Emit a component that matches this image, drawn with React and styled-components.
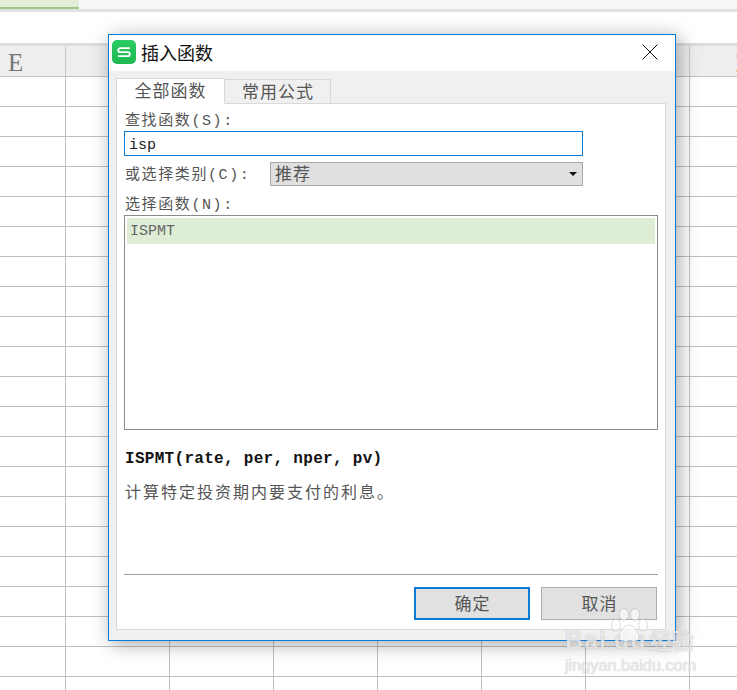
import React from 'react';
import styled, { createGlobalStyle } from 'styled-components';

const SERIF = `"Liberation Mono", "Noto Sans CJK SC", monospace`;
const CJK = `"Noto Sans CJK SC", "Liberation Sans", sans-serif`;

const ROW_COUNT = 21;
const COLUMNS = ['E', '', '', '', '', '', '', ''];

export default function App() {
  return (
    <Page>
      <GlobalStyle />
      <TopStrip>
        <ActiveSheet />
      </TopStrip>
      <FormulaBar />
      <Sheet>
        {COLUMNS.map((name, i) => (
          <ColumnHead key={i}>{name}</ColumnHead>
        ))}
        {Array.from({ length: ROW_COUNT * COLUMNS.length }).map((_, i) => (
          <Cell key={i} />
        ))}
      </Sheet>
      <OrangeMark />

      <Dialog>
        <TitleBar>
          <TitleLeft>
            <AppIcon />
            <Title>插入函数</Title>
          </TitleLeft>
          <CloseIcon />
        </TitleBar>

        <Body>
          <Tabs>
            <Tab $active>全部函数</Tab>
            <Tab>常用公式</Tab>
          </Tabs>
          <Pane>
            <Label>查找函数(S):</Label>
            <SearchBox>isp</SearchBox>
            <CategoryRow>
              <CategoryLabel>或选择类别(C):</CategoryLabel>
              <Select>
                <span>推荐</span>
                <Arrow />
              </Select>
            </CategoryRow>
            <ListLabel>选择函数(N):</ListLabel>
            <FunctionList>
              <FunctionItem>ISPMT</FunctionItem>
            </FunctionList>
            <Signature>ISPMT(rate, per, nper, pv)</Signature>
            <Description>计算特定投资期内要支付的利息。</Description>
            <Footer>
              <Button $primary>确定</Button>
              <Button>取消</Button>
            </Footer>
          </Pane>
        </Body>
      </Dialog>

      <Watermark>
        <WatermarkLogo>
          Bai
          <PawGap />
          du
          <WatermarkCn>经验</WatermarkCn>
          <PawIcon />
        </WatermarkLogo>
        <WatermarkUrl>jingyan.baidu.com</WatermarkUrl>
      </Watermark>
    </Page>
  );
}

function AppIcon() {
  return (
    <svg width="24" height="24" viewBox="0 0 24 24">
      <defs>
        <linearGradient id="wpsGreen" x1="0" y1="0" x2="0" y2="1">
          <stop offset="0" stopColor="#2bcb63" />
          <stop offset="1" stopColor="#1fb84f" />
        </linearGradient>
      </defs>
      <rect width="24" height="24" rx="5" fill="url(#wpsGreen)" />
      <path
        d="M18 8.2H8.2a2 2 0 0 0 0 4h7.6a2 2 0 0 1 0 4H6"
        fill="none"
        stroke="#fff"
        strokeWidth="1.8"
      />
    </svg>
  );
}

function CloseIcon() {
  return (
    <CloseSvg width="16" height="16" viewBox="0 0 16 16">
      <path d="M.5.5l15 15M15.5.5l-15 15" stroke="#111" strokeWidth="1" fill="none" />
    </CloseSvg>
  );
}

function PawIcon() {
  return (
    <PawSvg width="40" height="38" viewBox="0 0 40 38">
      <ellipse cx="7" cy="17" rx="4.5" ry="6" />
      <ellipse cx="15" cy="6.5" rx="4.5" ry="6" />
      <ellipse cx="26" cy="6.5" rx="4.5" ry="6" />
      <ellipse cx="34" cy="17" rx="4.5" ry="6" />
      <path d="M20 17c5 0 10 7 10 12 0 5-5 5-10 4-5 1-10 1-10-4 0-5 5-12 10-12z" />
    </PawSvg>
  );
}

// styled components:

const GlobalStyle = createGlobalStyle`
  html, body {
    margin: 0;
    padding: 0;
    background: #fff;
  }
`;

const Page = styled.div`
  position: relative;
  width: 737px;
  height: 690px;
  overflow: hidden;
  background: #fff;
`;

const TopStrip = styled.div`
  height: 9px;
  background: #f8f8f8;
  border-bottom: 3px solid #e2e2e4;
`;

const ActiveSheet = styled.div`
  width: 79px;
  height: 7px;
  background: #e3eed8;
  border-bottom: 2px solid #a3c585;
`;

const FormulaBar = styled.div`
  height: 31px;
  background: #fff;
`;

const Sheet = styled.div`
  display: grid;
  grid-template-columns: 66px repeat(7, 104px);
  grid-template-rows: 31px;
  grid-auto-rows: 30px;
  border-top: 3px solid #dcdcdc;
`;

const ColumnHead = styled.div`
  box-sizing: border-box;
  background: #eeeeee;
  border-right: 1px solid #c6c6c6;
  border-bottom: 1px solid #c0c0c0;
  padding: 2px 0 0 8px;
  font-family: "Liberation Serif", serif;
  font-size: 25px;
  line-height: 30px;
  color: #777;
`;

const Cell = styled.div`
  box-sizing: border-box;
  border-right: 1px solid #bfbfbf;
  border-bottom: 1px solid #bfbfbf;
`;

const OrangeMark = styled.div`
  position: absolute;
  right: 0;
  top: 55px;
  box-sizing: border-box;
  width: 1px;
  height: 17px;
  border-top: 2px solid #f3c27e;
  border-bottom: 2px solid #f3c27e;
`;

const Dialog = styled.div`
  position: absolute;
  left: 108px;
  top: 34px;
  box-sizing: border-box;
  width: 568px;
  height: 607px;
  display: flex;
  flex-direction: column;
  background: #f0f0f0;
  border: 1px solid #0a7bd8;
  box-shadow: 3px 3px 18px rgba(0, 0, 0, 0.35);
`;

const TitleBar = styled.div`
  height: 36px;
  box-sizing: border-box;
  flex: none;
  display: flex;
  align-items: center;
  justify-content: space-between;
  padding: 0 17px 2px 3px;
  background: #fff;
`;

const TitleLeft = styled.div`
  display: flex;
  align-items: center;
  gap: 5px;
`;

const Title = styled.div`
  font-family: ${CJK};
  font-size: 18px;
  color: #111;
`;

const CloseSvg = styled.svg`
  display: block;
`;

const Body = styled.div`
  flex: 1;
  display: flex;
  flex-direction: column;
  padding: 7px 9px 10px 7px;
  min-height: 0;
`;

const Tabs = styled.div`
  display: flex;
  align-items: flex-end;
  height: 26px;
  margin-bottom: -1px;
  position: relative;
`;

const Tab = styled.div`
  box-sizing: border-box;
  width: ${(p) => (p.$active ? '109px' : '106px')};
  height: ${(p) => (p.$active ? '26px' : '25px')};
  padding-left: ${(p) => (p.$active ? '0' : '1px')};
  background: ${(p) => (p.$active ? '#fff' : '#f0f0f0')};
  border: 1px solid #d9d9d9;
  border-left-width: ${(p) => (p.$active ? '1px' : '0')};
  border-bottom-color: ${(p) => (p.$active ? '#fff' : '#d9d9d9')};
  font-family: ${CJK};
  font-size: 17px;
  letter-spacing: 1px;
  line-height: 21px;
  text-align: center;
  color: #555;
`;

const Pane = styled.div`
  flex: 1;
  display: flex;
  flex-direction: column;
  box-sizing: border-box;
  background: #fff;
  border: 1px solid #d9d9d9;
  padding: 7px 7px 9px 7px;
  min-height: 0;
`;

const Label = styled.div`
  padding-left: 1px;
  font-family: ${SERIF};
  font-size: 15px;
  line-height: 22px;
  letter-spacing: 1.6px;
  color: #555;
  white-space: nowrap;
`;

const CategoryLabel = styled(Label)`
  padding-top: 4px;
`;

const SearchBox = styled.div`
  box-sizing: border-box;
  width: 459px;
  height: 25px;
  margin-top: -2px;
  padding: 2px 0 0 4px;
  border: 1px solid #0a7bd8;
  font-family: ${SERIF};
  font-size: 15px;
  line-height: 23px;
  color: #222;
`;

const CategoryRow = styled.div`
  display: flex;
  align-items: center;
  justify-content: space-between;
  width: 459px;
  height: 24px;
  margin-top: 6px;
`;

const Select = styled.div`
  box-sizing: border-box;
  width: 313px;
  height: 24px;
  display: flex;
  align-items: center;
  justify-content: space-between;
  padding: 0 5px 4px 4px;
  background: #e0e0e0;
  border: 1px solid #aaaaaa;
  font-family: ${CJK};
  font-size: 17px;
  letter-spacing: 1px;
  color: #555;
`;

const Arrow = styled.i`
  width: 0;
  height: 0;
  margin-top: 4px;
  border-left: 4px solid transparent;
  border-right: 4px solid transparent;
  border-top: 4px solid #111;
`;

const ListLabel = styled(Label)`
  margin-top: 9px;
`;

const FunctionList = styled.div`
  box-sizing: border-box;
  width: 534px;
  height: 215px;
  margin-top: -2px;
  padding: 2px;
  border: 1px solid #8a8a8a;
`;

const FunctionItem = styled.div`
  box-sizing: border-box;
  height: 26px;
  padding: 2px 0 0 3px;
  background: #deedd6;
  font-family: ${SERIF};
  font-size: 15px;
  line-height: 24px;
  color: #666;
`;

const Signature = styled.div`
  margin-top: 18px;
  padding-left: 1px;
  font-family: ${SERIF};
  font-size: 16px;
  font-weight: 700;
  letter-spacing: 0.3px;
  line-height: 22px;
  color: #111;
  white-space: nowrap;
`;

const Description = styled.div`
  margin-top: 10px;
  padding-left: 1px;
  font-family: ${CJK};
  font-size: 16px;
  letter-spacing: 2px;
  line-height: 22px;
  color: #555;
`;

const Footer = styled.div`
  margin-top: auto;
  width: 534px;
  height: 46px;
  box-sizing: border-box;
  display: flex;
  justify-content: flex-end;
  gap: 11px;
  padding: 12px 1px 0 0;
  border-top: 1px solid #a0a0a0;
`;

const Button = styled.div`
  box-sizing: border-box;
  width: 116px;
  height: 33px;
  padding-left: 1px;
  background: #e1e1e1;
  border: ${(p) => (p.$primary ? '2px solid #0a7bd8' : '1px solid #adadad')};
  font-family: ${CJK};
  font-size: 17px;
  line-height: ${(p) => (p.$primary ? '27px' : '29px')};
  letter-spacing: 1px;
  text-align: center;
  color: #555;
`;

const Watermark = styled.div`
  position: absolute;
  left: 565px;
  top: 608px;
  width: 140px;
  color: rgba(255, 255, 255, 0.72);
  text-shadow: 0 0 1px rgba(90, 90, 90, 0.5);
  font-family: "Liberation Sans", "Noto Sans CJK SC", sans-serif;
`;

const WatermarkLogo = styled.div`
  position: relative;
  padding-top: 18px;
  font-size: 25px;
  font-weight: 700;
  letter-spacing: 1px;
  line-height: 26px;
  white-space: nowrap;
`;

const PawGap = styled.span`
  display: inline-block;
  width: 7px;
`;

const PawSvg = styled.svg`
  position: absolute;
  left: 44px;
  top: 0;
  fill: rgba(255, 255, 255, 0.62);
  stroke: rgba(110, 110, 110, 0.3);
  stroke-width: 0.8;
`;

const WatermarkCn = styled.span`
  margin-left: 3px;
  font-size: 22px;
  letter-spacing: 0;
  font-family: ${CJK};
`;

const WatermarkUrl = styled.div`
  margin-top: 3px;
  font-size: 16.3px;
  line-height: 18px;
  white-space: nowrap;
`;
